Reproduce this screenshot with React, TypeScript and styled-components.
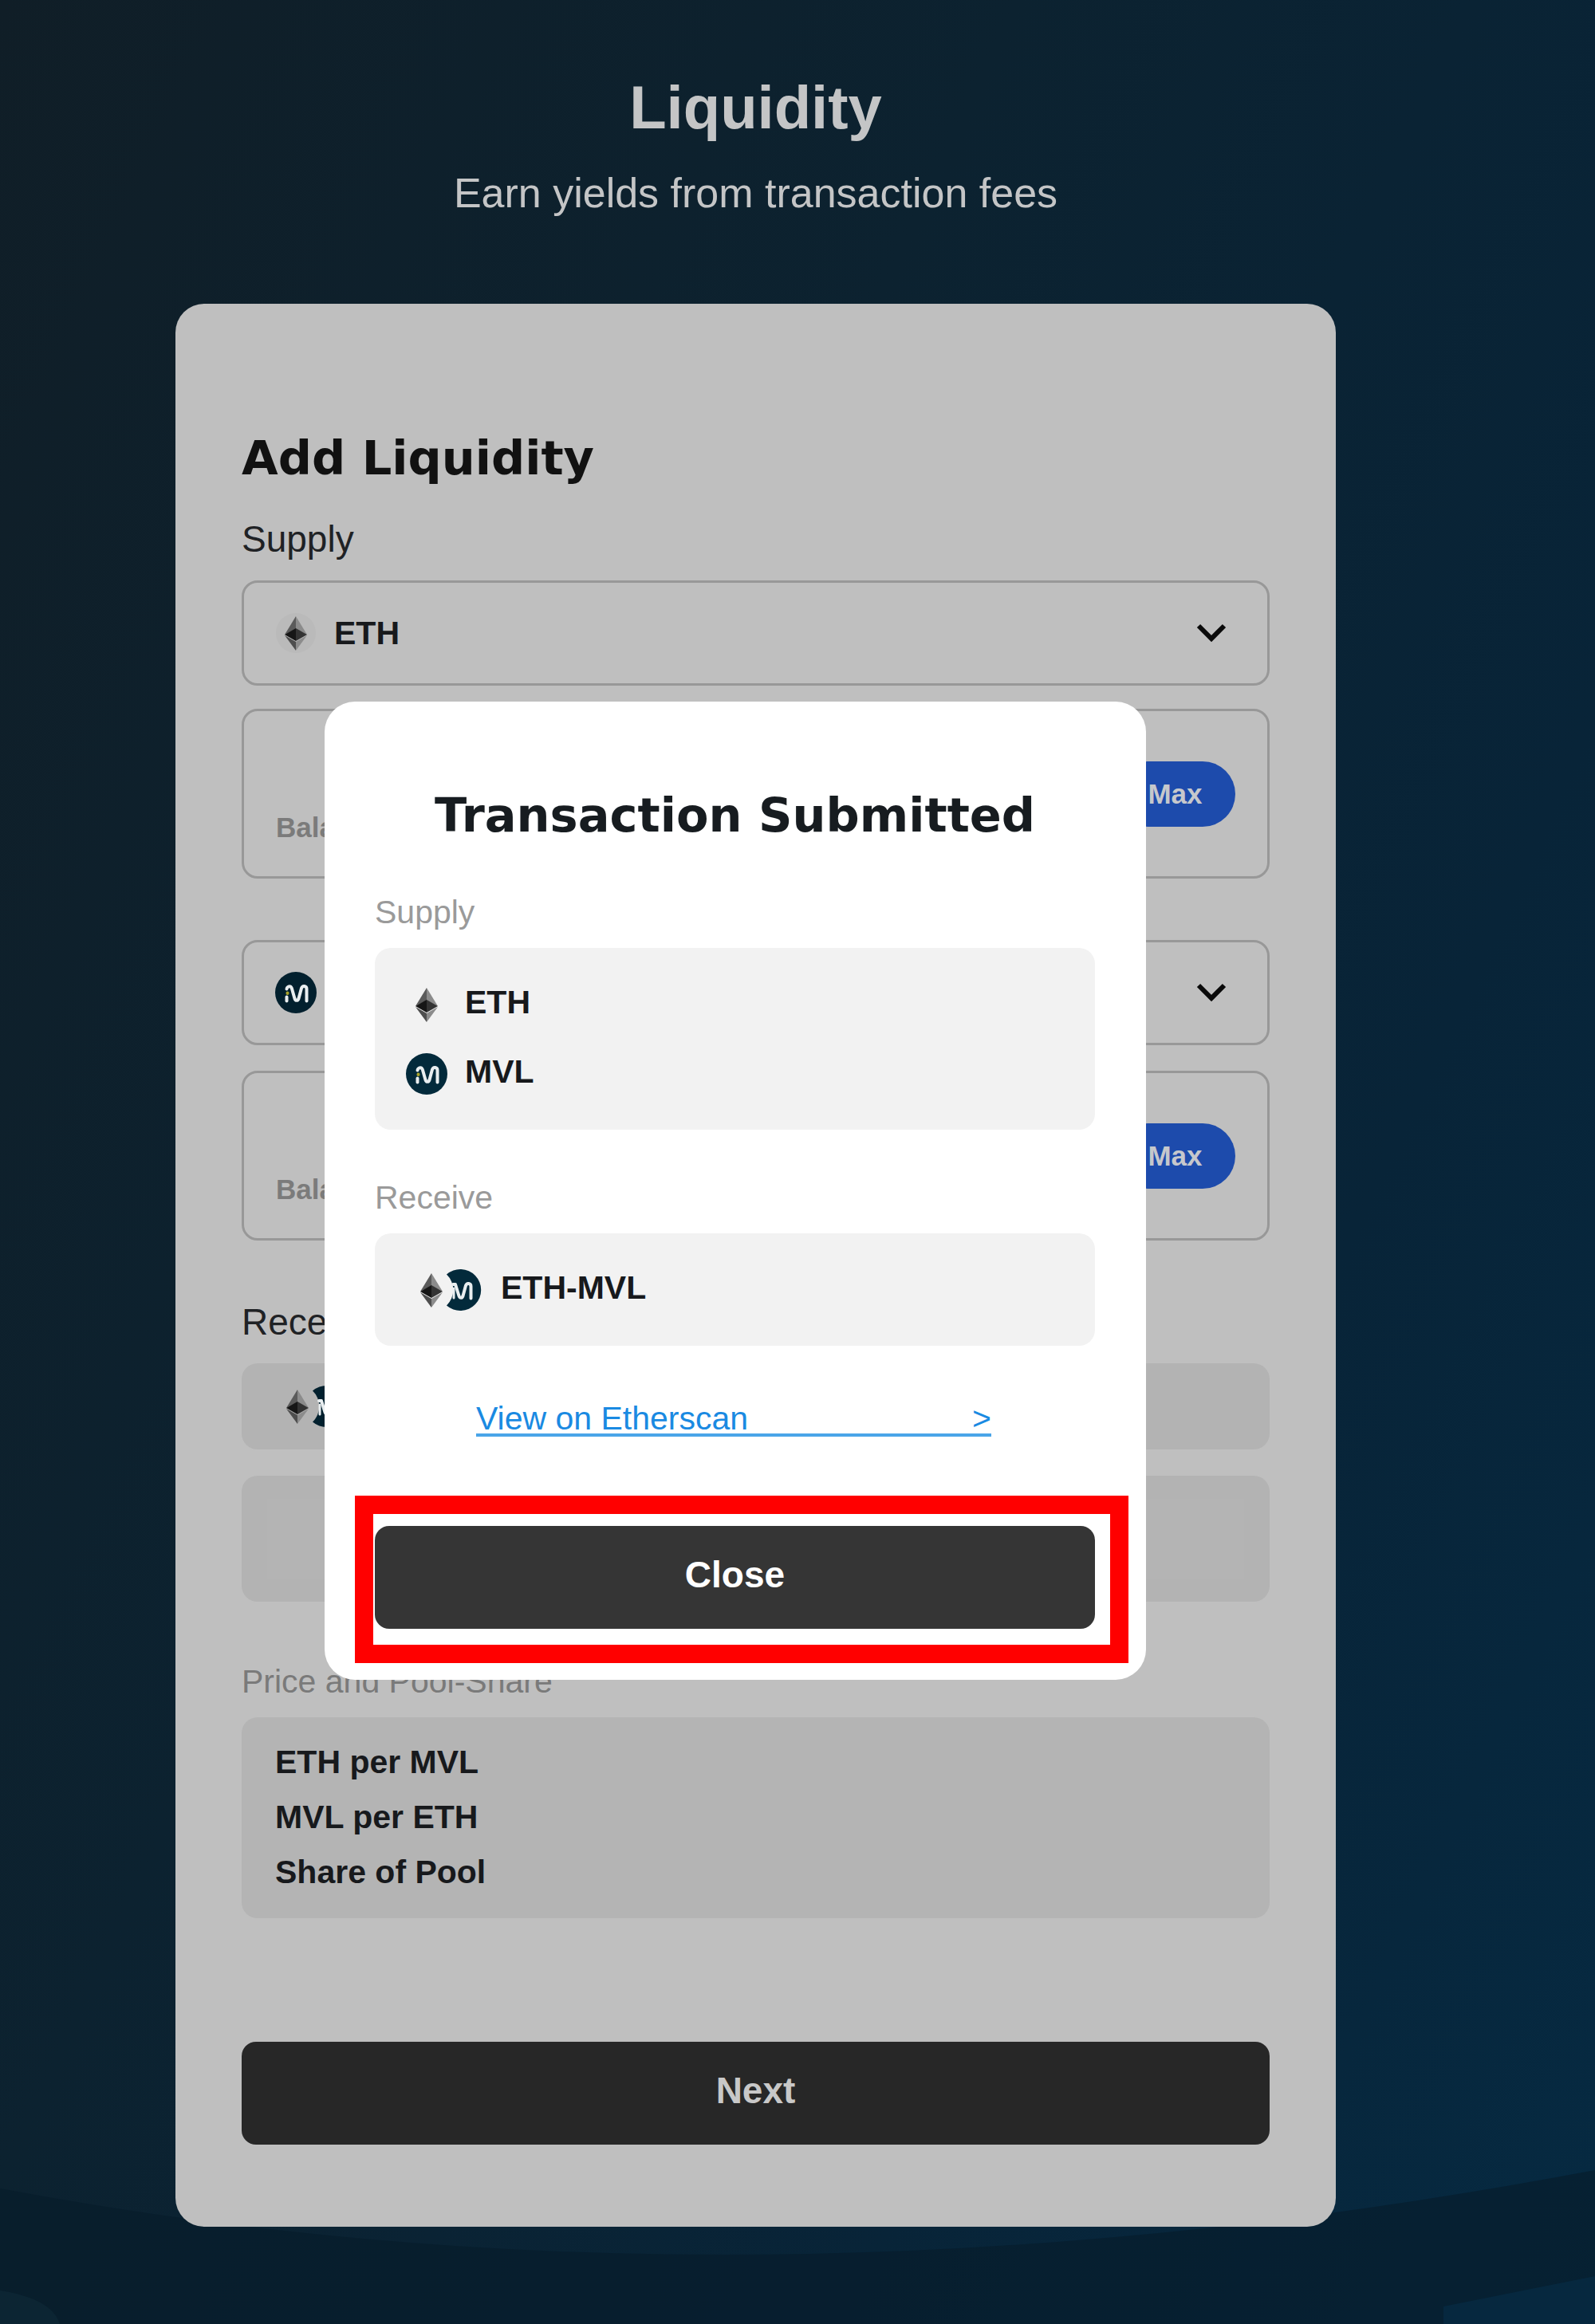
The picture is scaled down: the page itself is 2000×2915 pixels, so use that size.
import React from "react";
import styled, { createGlobalStyle } from "styled-components";

const sans = `"Liberation Sans", Arial, Helvetica, sans-serif`;
const display = `"DejaVu Sans", Verdana, sans-serif`;

const GlobalStyle = createGlobalStyle`
  *, *::before, *::after { box-sizing: border-box; }
  body { margin: 0; background: #0a2231; font-family: ${sans}; }
  h1, h2, p { margin: 0; }
  button, input, select { font-family: inherit; }
`;

const Page = styled.div`
  position: relative;
  min-height: 100vh;
  padding: 91px 325px 121px 220px;
  background: linear-gradient(115deg, #101e27 0%, #0c2230 38%, #082438 72%, #062a42 100%);
`;

const Waves = styled.svg`
  position: absolute;
  left: 0;
  bottom: 0;
  width: 100%;
  height: 200px;
`;

const Header = styled.header`
  position: relative;
  display: flex;
  flex-direction: column;
  align-items: center;
  gap: 33px;
  margin-bottom: 109px;
  color: #c4c5c6;
  text-align: center;
`;

const PageTitle = styled.h1`
  font-size: 76px;
  line-height: 88px;
`;

const Tagline = styled.p`
  font-size: 52px;
  line-height: 60px;
`;

const Card = styled.main`
  position: relative;
  display: flex;
  flex-direction: column;
  padding: 158px 83px 103px;
  border-radius: 36px;
  background: #bfbfbf;
`;

const Heading = styled.h2<{ $centered?: boolean }>`
  font-family: ${display};
  font-size: 59px;
  font-weight: 700;
  line-height: 72px;
  color: ${(p) => (p.$centered ? "#171c20" : "#111111")};
  text-align: ${(p) => (p.$centered ? "center" : "left")};
`;

const FormSection = styled.section<{ $top: number }>`
  display: flex;
  flex-direction: column;
  margin-top: ${(p) => p.$top}px;
`;

const FieldLabel = styled.label`
  margin-bottom: 24px;
  font-size: 46px;
  line-height: 56px;
  color: #1f2225;
`;

const MutedLabel = styled.p<{ $dim?: boolean }>`
  margin-bottom: 20px;
  font-size: 41px;
  line-height: 50px;
  color: ${(p) => (p.$dim ? "#7a7a7a" : "#9a9a9a")};
`;

const TokenField = styled.div`
  display: flex;
  align-items: center;
  gap: 22px;
  height: 132px;
  padding: 0 39px;
  border: 3px solid #989898;
  border-radius: 20px;
`;

const TokenSelect = styled.select`
  flex: 1;
  min-width: 0;
  padding: 0;
  border: 0;
  background: transparent;
  appearance: none;
  font-size: 41px;
  font-weight: 700;
  line-height: 46px;
  color: #17191c;
`;

const Chevron = styled.svg`
  width: 38px;
  height: 24px;
  margin-right: 12px;
`;

const AmountField = styled.div<{ $top: number }>`
  display: flex;
  align-items: center;
  height: 213px;
  margin-top: ${(p) => p.$top}px;
  padding: 0 40px;
  border: 3px solid #989898;
  border-radius: 20px;
`;

const AmountColumn = styled.div`
  display: flex;
  flex: 1;
  flex-direction: column;
`;

const AmountInput = styled.input`
  width: 100%;
  height: 85px;
  padding: 0;
  border: 0;
  background: transparent;
  font-size: 46px;
`;

const Balance = styled.span`
  font-size: 35px;
  font-weight: 700;
  line-height: 40px;
  color: #7b7b7b;
`;

const MaxButton = styled.button`
  width: 151px;
  height: 82px;
  padding: 0;
  border: 0;
  border-radius: 41px;
  background: #1d4bac;
  font-size: 35px;
  font-weight: 700;
  color: #c6c8cc;
`;

const SummaryBox = styled.div<{ $height: number; $top?: number }>`
  display: flex;
  align-items: center;
  height: ${(p) => p.$height}px;
  margin-top: ${(p) => p.$top ?? 0}px;
  padding: 0 44px;
  border-radius: 20px;
  background: #b3b3b3;
`;

const ReceiveInput = styled.input`
  flex: 1;
  min-width: 0;
  height: 100px;
  margin: 0 -12px;
  padding: 0 12px;
  border: 0;
  background: #b4b4b4;
  font-size: 46px;
`;

const PoolFacts = styled.ul`
  margin: 0;
  padding: 22px 42px 23px;
  border-radius: 20px;
  background: #b4b4b4;
  list-style: none;
`;

const PoolFact = styled.li`
  font-size: 41px;
  font-weight: 700;
  line-height: 69px;
  color: #17191c;
`;

const ActionButton = styled.button<{ $muted?: boolean }>`
  width: 100%;
  height: 129px;
  padding: 0 0 8px;
  border: 0;
  border-radius: 18px;
  background: ${(p) => (p.$muted ? "#272727" : "#353535")};
  font-size: 46px;
  font-weight: 700;
  color: ${(p) => (p.$muted ? "#c8c8c8" : "#ffffff")};
`;

const NextRow = styled.div`
  margin-top: 155px;
`;

const Dialog = styled.section`
  position: absolute;
  top: 499px;
  left: 187px;
  right: 238px;
  display: flex;
  flex-direction: column;
  padding: 107px 64px 64px 63px;
  border-radius: 38px;
  background: #ffffff;
`;

const DialogSection = styled.div<{ $top: number }>`
  margin-top: ${(p) => p.$top}px;
`;

const TokenList = styled.ul`
  display: flex;
  flex-direction: column;
  gap: 35px;
  margin: 0;
  padding: 45px 39px 44px;
  border-radius: 20px;
  background: #f2f2f2;
  list-style: none;
`;

const TokenRow = styled.li<{ $pair?: boolean }>`
  display: flex;
  align-items: flex-start;
  gap: ${(p) => (p.$pair ? 24 : 22)}px;
  padding-left: ${(p) => (p.$pair ? 6 : 0)}px;
  font-size: 41px;
  font-weight: 700;
  line-height: 46px;
  color: #17191c;
`;

const EtherscanLink = styled.a`
  display: flex;
  justify-content: space-between;
  margin: 72px 130px 112px 127px;
  border-bottom: 4px solid #4aa5e8;
  font-size: 41px;
  line-height: 38px;
  color: #1a8ae2;
  text-decoration: none;
`;

const CloseRow = styled.div`
  position: relative;
  display: flex;
`;

const Highlight = styled.span`
  position: absolute;
  inset: -38px -42px -43px -25px;
  border: 23px solid #ff0000;
  pointer-events: none;
`;

const Icon = styled.svg`
  flex: none;
  display: block;
`;

const Diamond = () => (
  <g>
    <polygon points="26,5 12,28 26,21" fill="#5b5b5b" />
    <polygon points="26,5 40,28 26,21" fill="#8b8b8b" />
    <polygon points="26,20 12,28 26,36" fill="#161616" />
    <polygon points="26,20 40,28 26,36" fill="#333333" />
    <polygon points="12,29 26,37 26,48" fill="#4e4e4e" />
    <polygon points="40,29 26,37 26,48" fill="#8c8c8c" />
  </g>
);

const MMark = () => (
  <g fill="none" stroke="#e9eef0" strokeWidth="4" strokeLinecap="round" strokeLinejoin="round">
    <path d="M14.500 21.500C15 18.500 19 16.500 20.800 20.500L24.500 33.500C25.500 36.500 28.500 36.500 29.500 33.500L33 20.500C34.500 16.500 39.500 17.500 39.500 21.500V36.500" />
    <path d="M14.500 31.500V36.500" />
    <path d="M15.500 26.500V27" stroke="#a9a32a" />
  </g>
);

const EthIcon = ({ halo }: { halo: string }) => (
  <Icon width="52" height="52" viewBox="0 0 52 52" aria-hidden="true">
    <circle cx="26" cy="26" r="25" fill={halo} />
    <Diamond />
  </Icon>
);

const MvlIcon = ({ fill }: { fill: string }) => (
  <Icon width="52" height="52" viewBox="0 0 52 52" aria-hidden="true">
    <circle cx="26" cy="26" r="26" fill={fill} />
    <MMark />
  </Icon>
);

const PairIcon = ({ fill }: { fill: string }) => (
  <Icon width="89" height="52" viewBox="0 0 89 52" aria-hidden="true">
    <path d="M45 6.500A26 26 0 1 1 45 45.500A27 27 0 0 0 45 6.500Z" fill={fill} />
    <g transform="translate(36 0)" fill="none" stroke="#e9eef0" strokeWidth="4" strokeLinecap="round" strokeLinejoin="round">
      <path d="M17 19L20 19L24.500 33.500C25.500 36.500 28.500 36.500 29.500 33.500L33 20.500C34.500 16.500 39.500 17.500 39.500 21.500V36.500" />
      <path d="M18 24V36" strokeWidth="3" />
    </g>
    <Diamond />
  </Icon>
);

const ChevronDown = () => (
  <Chevron viewBox="0 0 38 24" aria-hidden="true">
    <path d="M3 3L19 19L35 3" fill="none" stroke="#0a0a0a" strokeWidth="6" />
  </Chevron>
);

const Amount = ({ token, top }: { token: string; top: number }) => (
  <AmountField $top={top}>
    <AmountColumn>
      <AmountInput type="text" aria-label={`${token} amount`} />
      <Balance>Balance</Balance>
    </AmountColumn>
    <MaxButton type="button">Max</MaxButton>
  </AmountField>
);

export default function App() {
  return (
    <>
      <GlobalStyle />
      <Page>
        <Waves viewBox="0 0 2000 200" preserveAspectRatio="none" aria-hidden="true">
          <path d="M0 30Q940 207 2000 7V200H0Z" fill="#071c2a" fillOpacity="0.62" />
          <path d="M0 158Q65 168 75 200H0Z" fill="#0c2533" />
          <path d="M1810 178L2000 140V200H1810Z" fill="#06283f" />
        </Waves>
        <Header>
          <PageTitle>Liquidity</PageTitle>
          <Tagline>Earn yields from transaction fees</Tagline>
        </Header>
        <Card>
          <Heading>Add Liquidity</Heading>
          <FormSection $top={37}>
            <FieldLabel htmlFor="supply-a">Supply</FieldLabel>
            <TokenField>
              <EthIcon halo="#bababa" />
              <TokenSelect id="supply-a" defaultValue="ETH">
                <option>ETH</option>
              </TokenSelect>
              <ChevronDown />
            </TokenField>
            <Amount token="ETH" top={29} />
          </FormSection>
          <FormSection $top={77}>
            <TokenField>
              <MvlIcon fill="#02202e" />
              <TokenSelect aria-label="Second token" defaultValue="MVL">
                <option>MVL</option>
              </TokenSelect>
              <ChevronDown />
            </TokenField>
            <Amount token="MVL" top={32} />
          </FormSection>
          <FormSection $top={74}>
            <FieldLabel htmlFor="receive">Receive</FieldLabel>
            <SummaryBox $height={108}>
              <PairIcon fill="#02202e" />
            </SummaryBox>
            <SummaryBox $height={158} $top={33}>
              <ReceiveInput id="receive" type="text" readOnly />
            </SummaryBox>
          </FormSection>
          <FormSection $top={75}>
            <MutedLabel $dim>Price and Pool-Share</MutedLabel>
            <PoolFacts>
              <PoolFact>ETH per MVL</PoolFact>
              <PoolFact>MVL per ETH</PoolFact>
              <PoolFact>Share of Pool</PoolFact>
            </PoolFacts>
          </FormSection>
          <NextRow>
            <ActionButton type="button" $muted>Next</ActionButton>
          </NextRow>

          <Dialog role="dialog" aria-labelledby="dialog-title">
            <Heading id="dialog-title" $centered>Transaction Submitted</Heading>
            <DialogSection $top={60}>
              <MutedLabel>Supply</MutedLabel>
              <TokenList>
                <TokenRow><EthIcon halo="#f2f2f2" />ETH</TokenRow>
                <TokenRow><MvlIcon fill="#032a3b" />MVL</TokenRow>
              </TokenList>
            </DialogSection>
            <DialogSection $top={60}>
              <MutedLabel>Receive</MutedLabel>
              <TokenList>
                <TokenRow $pair><PairIcon fill="#032a3b" />ETH-MVL</TokenRow>
              </TokenList>
            </DialogSection>
            <EtherscanLink href="#etherscan">
              <span>View on Etherscan</span>
              <span>&gt;</span>
            </EtherscanLink>
            <CloseRow>
              <ActionButton type="button">Close</ActionButton>
              <Highlight />
            </CloseRow>
          </Dialog>
        </Card>
      </Page>
    </>
  );
}
